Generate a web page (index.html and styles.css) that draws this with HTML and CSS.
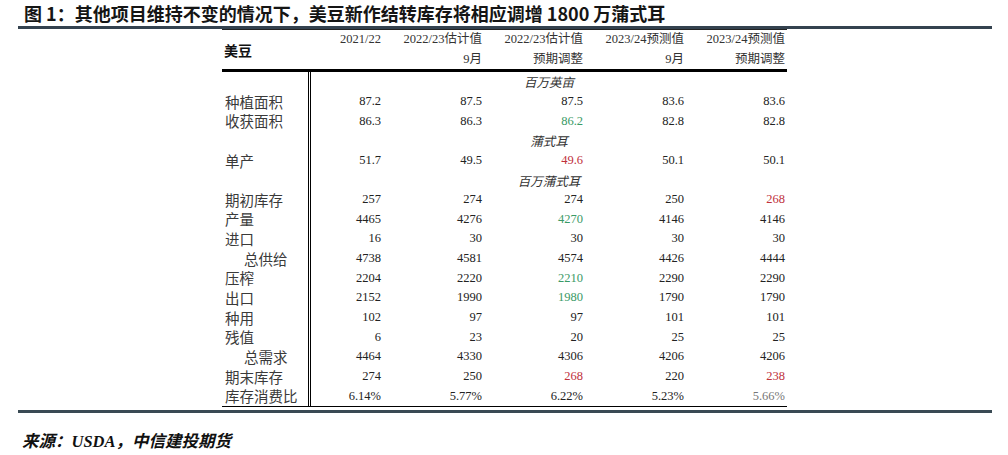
FILE: index.html
```html
<!DOCTYPE html>
<html lang="zh">
<head>
<meta charset="utf-8">
<link rel="stylesheet" href="styles.css">
</head>
<body>
<div class="page">
  <h1 class="title">图 1：其他项目维持不变的情况下，美豆新作结转库存将相应调增 1800 万蒲式耳</h1>
  <div class="bar bar-top"></div>
  <div class="tbl">
    <div class="head">
      <div class="head-label">美豆</div>
      <div class="hc">2021/22</div>
      <div class="hc">2022/23估计值</div>
      <div class="hc">2022/23估计值</div>
      <div class="hc">2023/24预测值</div>
      <div class="hc">2023/24预测值</div>
      <div class="hc"></div>
      <div class="hc">9月</div>
      <div class="hc">预期调整</div>
      <div class="hc">9月</div>
      <div class="hc">预期调整</div>
    </div>
    <div class="body">
      <div class="row unit"><div class="lbl"></div><div class="u">百万英亩</div></div>
      <div class="row"><div class="lbl">种植面积</div><div class="c">87.2</div><div class="c">87.5</div><div class="c">87.5</div><div class="c">83.6</div><div class="c">83.6</div></div>
      <div class="row"><div class="lbl">收获面积</div><div class="c">86.3</div><div class="c">86.3</div><div class="c g">86.2</div><div class="c">82.8</div><div class="c">82.8</div></div>
      <div class="row unit"><div class="lbl"></div><div class="u">蒲式耳</div></div>
      <div class="row"><div class="lbl">单产</div><div class="c">51.7</div><div class="c">49.5</div><div class="c r">49.6</div><div class="c">50.1</div><div class="c">50.1</div></div>
      <div class="row unit"><div class="lbl"></div><div class="u">百万蒲式耳</div></div>
      <div class="row"><div class="lbl">期初库存</div><div class="c">257</div><div class="c">274</div><div class="c">274</div><div class="c">250</div><div class="c r">268</div></div>
      <div class="row"><div class="lbl">产量</div><div class="c">4465</div><div class="c">4276</div><div class="c g">4270</div><div class="c">4146</div><div class="c">4146</div></div>
      <div class="row"><div class="lbl">进口</div><div class="c">16</div><div class="c">30</div><div class="c">30</div><div class="c">30</div><div class="c">30</div></div>
      <div class="row"><div class="lbl ind">总供给</div><div class="c">4738</div><div class="c">4581</div><div class="c">4574</div><div class="c">4426</div><div class="c">4444</div></div>
      <div class="row"><div class="lbl">压榨</div><div class="c">2204</div><div class="c">2220</div><div class="c g">2210</div><div class="c">2290</div><div class="c">2290</div></div>
      <div class="row"><div class="lbl">出口</div><div class="c">2152</div><div class="c">1990</div><div class="c g">1980</div><div class="c">1790</div><div class="c">1790</div></div>
      <div class="row"><div class="lbl">种用</div><div class="c">102</div><div class="c">97</div><div class="c">97</div><div class="c">101</div><div class="c">101</div></div>
      <div class="row"><div class="lbl">残值</div><div class="c">6</div><div class="c">23</div><div class="c">20</div><div class="c">25</div><div class="c">25</div></div>
      <div class="row"><div class="lbl ind">总需求</div><div class="c">4464</div><div class="c">4330</div><div class="c">4306</div><div class="c">4206</div><div class="c">4206</div></div>
      <div class="row"><div class="lbl">期末库存</div><div class="c">274</div><div class="c">250</div><div class="c r">268</div><div class="c">220</div><div class="c r">238</div></div>
      <div class="row"><div class="lbl">库存消费比</div><div class="c">6.14%</div><div class="c">5.77%</div><div class="c">6.22%</div><div class="c">5.23%</div><div class="c faded">5.66%</div></div>
    </div>
  </div>
  <div class="bar bar-bottom"></div>
  <p class="source">来源：USDA，中信建投期货</p>
</div>
</body>
</html>
```

FILE: styles.css
```css
html, body {
  margin: 0;
  padding: 0;
  background: #fff;
}
.page {
  width: 1008px;
  height: 455px;
  position: relative;
  overflow: hidden;
}
.title {
  margin: 0;
  padding: 0 0 0 24px;
  height: 26px;
  font-family: "Noto Sans CJK SC", "Noto Sans", sans-serif;
  font-weight: 700;
  font-size: 18px;
  line-height: 26px;
  color: #151515;
  white-space: nowrap;
}
.bar {
  margin-left: 18px;
  width: 974px;
  background: #34424f;
}
.bar-top {
  height: 3px;
}
.bar-bottom {
  height: 3px;
  margin-top: 3px;
  background: #3a4a54;
}
.tbl {
  margin-left: 222px;
  width: 565px;
  border-top: 1px solid #222;
  font-family: "Liberation Serif", "Noto Sans CJK SC", serif;
  color: #222;
}
.head {
  display: grid;
  grid-template-columns: 89px 72px 101px 101px 101px 101px;
  grid-template-rows: 18px 21px;
  border-bottom: 3px solid #000;
  font-size: 12.5px;
}
.head-label {
  grid-row: 1 / 3;
  display: flex;
  align-items: center;
  padding-left: 2px;
  font-family: "Noto Sans CJK SC", sans-serif;
  font-weight: 700;
  font-size: 14px;
  color: #111;
}
.hc {
  text-align: right;
  padding-right: 2px;
  line-height: 18px;
  color: #333;
}
.head .hc:nth-child(n+7) {
  line-height: 22px;
}
.body {
  border-bottom: 1px solid #000;
}
.row {
  display: grid;
  grid-template-columns: 89px 72px 101px 101px 101px 101px;
  height: 19.65px;
  align-items: center;
  font-size: 12.5px;
}
.lbl {
  height: 100%;
  box-sizing: border-box;
  border-right: 3px double #000;
  padding-left: 3px;
  font-family: "Noto Sans CJK SC", sans-serif;
  font-size: 14.5px;
  line-height: 19.65px;
  color: #3a3a3a;
  white-space: nowrap;
}
.lbl.ind {
  padding-left: 22px;
}
.c {
  text-align: right;
  padding-right: 2px;
}
.u {
  grid-column: 2 / 7;
  text-align: center;
  font-style: italic;
  font-synthesis: style;
  font-family: "Liberation Serif", "Noto Sans CJK SC", serif;
  color: #333;
  font-size: 12.5px;
}
.g {
  color: #3a9a66;
}
.r {
  color: #c0303c;
}
.faded {
  color: #777;
}
.source {
  margin: 0;
  padding: 20px 0 0 22px;
  font-family: "Liberation Serif", "Noto Sans CJK SC", serif;
  font-weight: 700;
  font-style: italic;
  font-synthesis: style weight;
  font-size: 16.5px;
  line-height: 18px;
  color: #111;
}
```
